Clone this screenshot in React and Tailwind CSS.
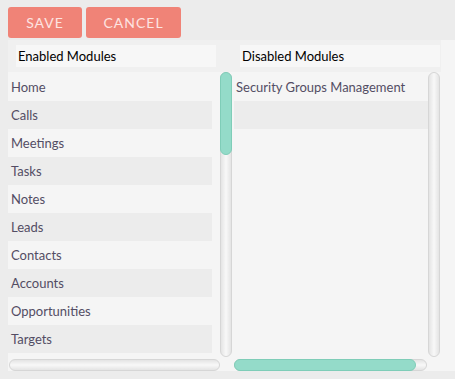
import React from "react";

const left = ["Home","Calls","Meetings","Tasks","Notes","Leads","Contacts","Accounts","Opportunities","Targets"];
const right = ["Security Groups Management", ""];

function Track({ className = "", children }) {
  return (
    <div className={"relative rounded-full border border-[#d6d6d6] bg-gradient-to-r from-[#e4e4e4] via-[#f8f8f8] to-[#e4e4e4] " + className}>
      {children}
    </div>
  );
}

function HTrack({ className = "", children }) {
  return (
    <div className={"relative rounded-full border border-[#d6d6d6] bg-gradient-to-b from-[#e4e4e4] via-[#f8f8f8] to-[#e4e4e4] " + className}>
      {children}
    </div>
  );
}

export default function App() {
  return (
    <div className="min-h-[379px] w-[455px] bg-[#ececec] font-['Lato','Open_Sans',sans-serif] text-[13px]">
      <div className="flex gap-[4px] pl-2 pt-[7px]">
        <button className="h-[31px] w-[74px] rounded-[3px] bg-[#f08377] text-[14px] tracking-[1px] text-[#fde4e1]">SAVE</button>
        <button className="h-[31px] w-[95px] rounded-[3px] bg-[#f08377] text-[14px] tracking-[1px] text-[#fde4e1]">CANCEL</button>
      </div>
      <div className="ml-2 mt-[2px] h-[331px] bg-[#f5f5f5] flex">
        {/* left column */}
        <div className="w-[224px] flex flex-col">
          <div className="h-[32px] bg-[#f0f0f0] pl-2 pt-[5px]">
            <div className="h-[22px] w-[200px] bg-[#f7f7f7] pl-[2px] leading-[22px] text-black">Enabled Modules</div>
          </div>
          <div className="flex h-[285px]">
            <div className="w-[204px] overflow-hidden pt-[1px]">
              {left.map((m, i) => (
                <div key={m} className={"h-[28px] pl-[3px] leading-[28px] text-[#534d64] " + (i % 2 ? "bg-[#ececec]" : "")}>{m}</div>
              ))}
            </div>
            <Track className="ml-2 w-[12px] h-[285px]">
              <div className="absolute -left-px -top-px w-[12px] h-[83px] rounded-full bg-[#94dbc9] border border-[#7fcdb8]" />
            </Track>
          </div>
          <div className="pt-[2px] pl-[1px]">
            <HTrack className="w-[211px] h-[12px]" />
          </div>
        </div>
        {/* right column */}
        <div className="w-[209px] flex flex-col">
          <div className="h-[32px] bg-[#f0f0f0] pl-2 pt-[5px]">
            <div className="h-[22px] w-[200px] bg-[#f7f7f7] pl-[2px] leading-[22px] text-black">Disabled Modules</div>
          </div>
          <div className="flex h-[285px]">
            <div className="ml-[2px] w-[194px] overflow-hidden pt-[1px]">
              {right.map((m, i) => (
                <div key={i} className={"h-[28px] pl-[2px] leading-[28px] text-[#534d64] " + (i % 2 ? "bg-[#ececec]" : "")}>{m}</div>
              ))}
            </div>
            <Track className="w-[12px] h-[285px]" />
          </div>
          <div className="pt-[2px] pl-[2px]">
            <HTrack className="w-[193px] h-[12px]">
              <div className="absolute -left-px -top-px h-[12px] w-[182px] rounded-full bg-[#94dbc9] border border-[#7fcdb8]" />
            </HTrack>
          </div>
        </div>
        <div className="flex-1" />
      </div>
    </div>
  );
}
